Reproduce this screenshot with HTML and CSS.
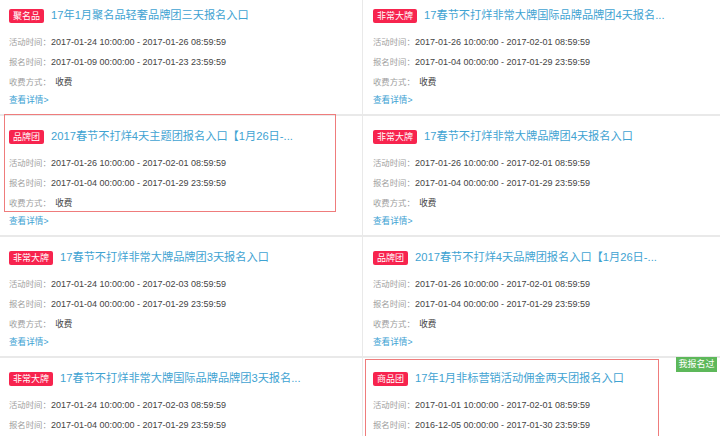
FILE: index.html
```html
<!DOCTYPE html>
<html lang="zh-CN">

<head>
    <meta charset="UTF-8">
    <meta name="viewport" content="width=device-width, initial-scale=1.0">
    <title>活动报名</title>
    <link rel="stylesheet" href="styles.css">
</head>

<body>
    <div class="list">
        <div class="card">
            <div class="head"><span class="tag">聚名品</span><a class="title">17年1月聚名品轻奢品牌团三天报名入口</a></div>
            <p class="meta"><span class="label">活动时间：</span><span class="val">2017-01-24 10:00:00 - 2017-01-26 08:59:59</span></p>
            <p class="meta"><span class="label">报名时间：</span><span class="val">2017-01-09 00:00:00 - 2017-01-23 23:59:59</span></p>
            <p class="meta"><span class="label">收费方式： </span><span class="val fee">收费</span></p>
            <a class="more">查看详情&gt;</a>
        </div>
        <div class="card">
            <div class="head"><span class="tag">非常大牌</span><a class="title">17春节不打烊非常大牌国际品牌品牌团4天报名...</a></div>
            <p class="meta"><span class="label">活动时间：</span><span class="val">2017-01-26 10:00:00 - 2017-02-01 08:59:59</span></p>
            <p class="meta"><span class="label">报名时间：</span><span class="val">2017-01-04 00:00:00 - 2017-01-29 23:59:59</span></p>
            <p class="meta"><span class="label">收费方式： </span><span class="val fee">收费</span></p>
            <a class="more">查看详情&gt;</a>
        </div>
        <div class="card marked">
            <div class="head"><span class="tag">品牌团</span><a class="title">2017春节不打烊4天主题团报名入口【1月26日-...</a></div>
            <p class="meta"><span class="label">活动时间：</span><span class="val">2017-01-26 10:00:00 - 2017-02-01 08:59:59</span></p>
            <p class="meta"><span class="label">报名时间：</span><span class="val">2017-01-04 00:00:00 - 2017-01-29 23:59:59</span></p>
            <p class="meta"><span class="label">收费方式： </span><span class="val fee">收费</span></p>
            <a class="more">查看详情&gt;</a>
        </div>
        <div class="card">
            <div class="head"><span class="tag">非常大牌</span><a class="title">17春节不打烊非常大牌品牌团4天报名入口</a></div>
            <p class="meta"><span class="label">活动时间：</span><span class="val">2017-01-26 10:00:00 - 2017-02-01 08:59:59</span></p>
            <p class="meta"><span class="label">报名时间：</span><span class="val">2017-01-04 00:00:00 - 2017-01-29 23:59:59</span></p>
            <p class="meta"><span class="label">收费方式： </span><span class="val fee">收费</span></p>
            <a class="more">查看详情&gt;</a>
        </div>
        <div class="card">
            <div class="head"><span class="tag">非常大牌</span><a class="title">17春节不打烊非常大牌品牌团3天报名入口</a></div>
            <p class="meta"><span class="label">活动时间：</span><span class="val">2017-01-24 10:00:00 - 2017-02-03 08:59:59</span></p>
            <p class="meta"><span class="label">报名时间：</span><span class="val">2017-01-04 00:00:00 - 2017-01-29 23:59:59</span></p>
            <p class="meta"><span class="label">收费方式： </span><span class="val fee">收费</span></p>
            <a class="more">查看详情&gt;</a>
        </div>
        <div class="card">
            <div class="head"><span class="tag">品牌团</span><a class="title">2017春节不打烊4天品牌团报名入口【1月26日-...</a></div>
            <p class="meta"><span class="label">活动时间：</span><span class="val">2017-01-26 10:00:00 - 2017-02-01 08:59:59</span></p>
            <p class="meta"><span class="label">报名时间：</span><span class="val">2017-01-04 00:00:00 - 2017-01-29 23:59:59</span></p>
            <p class="meta"><span class="label">收费方式： </span><span class="val fee">收费</span></p>
            <a class="more">查看详情&gt;</a>
        </div>
        <div class="card">
            <div class="head"><span class="tag">非常大牌</span><a class="title">17春节不打烊非常大牌国际品牌品牌团3天报名...</a></div>
            <p class="meta"><span class="label">活动时间：</span><span class="val">2017-01-24 10:00:00 - 2017-02-03 08:59:59</span></p>
            <p class="meta"><span class="label">报名时间：</span><span class="val">2017-01-04 00:00:00 - 2017-01-29 23:59:59</span></p>
        </div>
        <div class="card marked right">
            <span class="joined">我报名过</span>
            <div class="head"><span class="tag">商品团</span><a class="title">17年1月非标营销活动佣金两天团报名入口</a></div>
            <p class="meta"><span class="label">活动时间：</span><span class="val">2017-01-01 10:00:00 - 2017-02-01 08:59:59</span></p>
            <p class="meta"><span class="label">报名时间：</span><span class="val">2016-12-05 00:00:00 - 2017-01-30 23:59:59</span></p>
        </div>
    </div>
</body>
</html>
```

FILE: styles.css
```css
* {
    margin: 0;
    box-sizing: border-box;
    padding: 0;
}

body {
    width: 720px;
    height: 436px;
    overflow: hidden;
    background: #fff;
    font-family: "Liberation Sans", "Noto Sans CJK SC", sans-serif;
}

.list {
    display: grid;
    grid-template-columns: 362px 1fr;
    grid-auto-rows: 119px;
    column-gap: 1px;
    row-gap: 2px;
    margin-top: -5px;
    background: #e9e9e9;
}

.card {
    position: relative;
    padding: 13px 10px 0 9px;
    background: #fff;
}

.card:nth-child(even) {
    padding-left: 10px;
}

.card:nth-last-child(-n+2) {
    height: 83px;
}

.head {
    display: flex;
    align-items: center;
    height: 15px;
}

.tag {
    flex: none;
    height: 14px;
    padding: 0 4px;
    border-radius: 2px;
    background: #f7244e;
    color: #fff;
    font-size: 9px;
    line-height: 14px;
}

.title {
    margin-left: 7px;
    white-space: nowrap;
    overflow: hidden;
    color: #3fa3d2;
    font-size: 11.2px;
    line-height: 15px;
}

.meta {
    height: 20px;
    line-height: 20px;
    white-space: nowrap;
}

.head + .meta {
    margin-top: 7px;
}

.label {
    color: #a0a0a0;
    font-size: 8.4px;
}

.val {
    color: #444;
    font-size: 9px;
}

.fee {
    margin-left: 2px;
    font-size: 8.6px;
}

.more {
    display: block;
    color: #3d9fd3;
    font-size: 8.6px;
    line-height: 20px;
}

.marked::after {
    content: "";
    position: absolute;
    top: -2px;
    left: 4px;
    right: 26px;
    bottom: 23px;
    border: 1px solid #ef7c7c;
}

.marked.right::after {
    top: 1px;
    left: 2px;
    right: 61px;
    bottom: -20px;
}

.joined {
    position: absolute;
    top: -1px;
    right: 3px;
    width: 41px;
    height: 15px;
    background: #5db85a;
    color: #fff;
    font-size: 9px;
    line-height: 15px;
    text-align: center;
}
```
